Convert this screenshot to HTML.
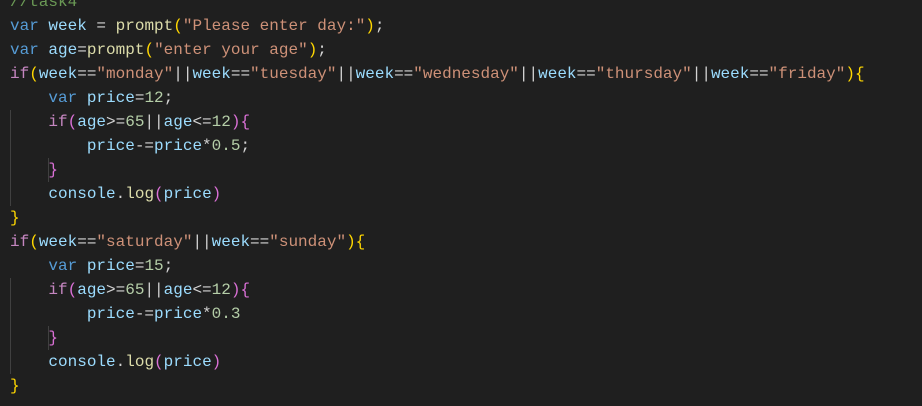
<!DOCTYPE html>
<html><head><style>
html,body{margin:0;padding:0;background:#1f1f1f;width:922px;height:406px;overflow:hidden}
#c{position:absolute;left:10px;top:-10px;font-family:"Liberation Mono",monospace;font-size:16px;line-height:24px;color:#d4d4d4;white-space:pre}
.k{color:#569cd6}.v{color:#9cdcfe}.f{color:#dcdcaa}.s{color:#ce9178}.c{color:#c586c0}.n{color:#b5cea8}.m{color:#6a9955}
.y{color:#ffd700}.p{color:#da70d6}
.g{position:absolute;width:1px;background:#404040}
</style></head><body>
<div class="g" style="left:10px;top:110px;height:96px"></div>
<div class="g" style="left:48px;top:158px;height:24px"></div>
<div class="g" style="left:10px;top:278px;height:96px"></div>
<div class="g" style="left:48px;top:326px;height:24px"></div>
<div id="c"><span class="m">//task4</span>
<span class="k">var</span> <span class="v">week</span> = <span class="f">prompt</span><span class="y">(</span><span class="s">"Please enter day:"</span><span class="y">)</span>;
<span class="k">var</span> <span class="v">age</span>=<span class="f">prompt</span><span class="y">(</span><span class="s">"enter your age"</span><span class="y">)</span>;
<span class="c">if</span><span class="y">(</span><span class="v">week</span>==<span class="s">"monday"</span>||<span class="v">week</span>==<span class="s">"tuesday"</span>||<span class="v">week</span>==<span class="s">"wednesday"</span>||<span class="v">week</span>==<span class="s">"thursday"</span>||<span class="v">week</span>==<span class="s">"friday"</span><span class="y">){</span>
    <span class="k">var</span> <span class="v">price</span>=<span class="n">12</span>;
    <span class="c">if</span><span class="p">(</span><span class="v">age</span>&gt;=<span class="n">65</span>||<span class="v">age</span>&lt;=<span class="n">12</span><span class="p">){</span>
        <span class="v">price</span>-=<span class="v">price</span>*<span class="n">0.5</span>;
    <span class="p">}</span>
    <span class="v">console</span>.<span class="f">log</span><span class="p">(</span><span class="v">price</span><span class="p">)</span>
<span class="y">}</span>
<span class="c">if</span><span class="y">(</span><span class="v">week</span>==<span class="s">"saturday"</span>||<span class="v">week</span>==<span class="s">"sunday"</span><span class="y">){</span>
    <span class="k">var</span> <span class="v">price</span>=<span class="n">15</span>;
    <span class="c">if</span><span class="p">(</span><span class="v">age</span>&gt;=<span class="n">65</span>||<span class="v">age</span>&lt;=<span class="n">12</span><span class="p">){</span>
        <span class="v">price</span>-=<span class="v">price</span>*<span class="n">0.3</span>
    <span class="p">}</span>
    <span class="v">console</span>.<span class="f">log</span><span class="p">(</span><span class="v">price</span><span class="p">)</span>
<span class="y">}</span></div>
</body></html>
